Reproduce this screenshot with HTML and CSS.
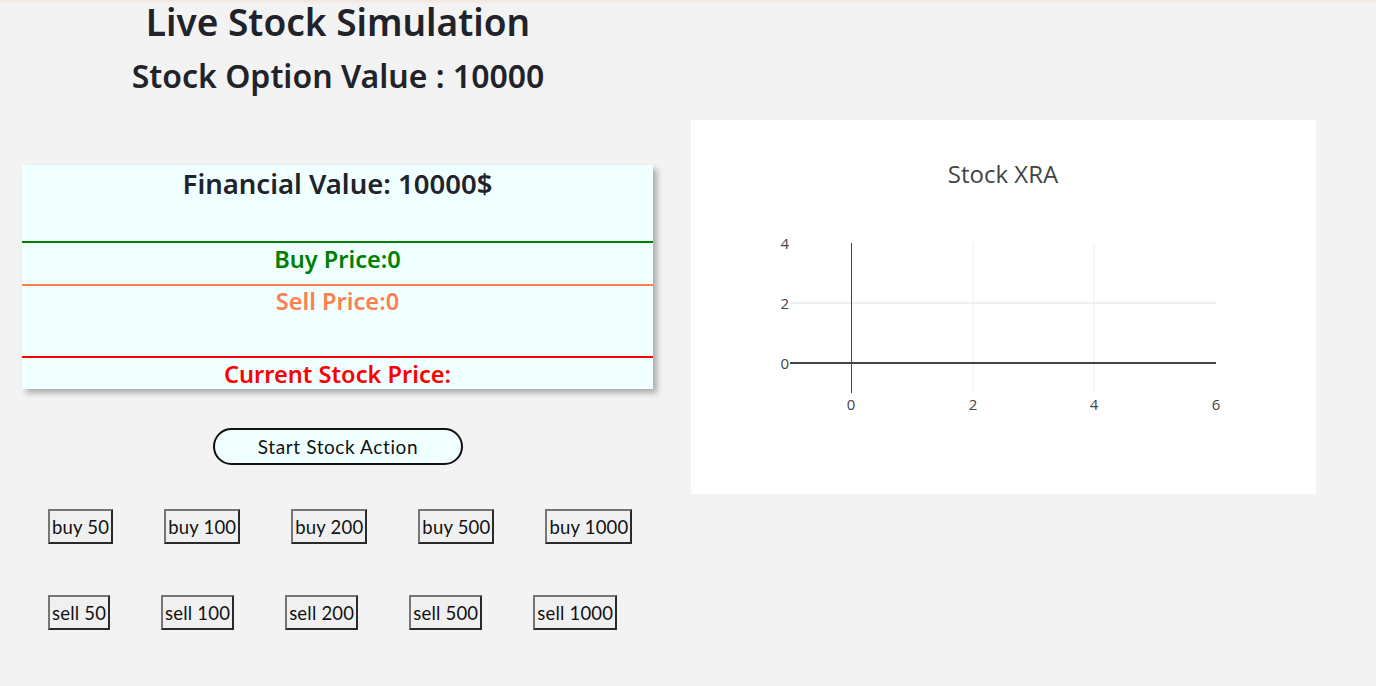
FILE: index.html
```html
<!DOCTYPE html>
<html>
<head>
<meta charset="utf-8">
<link rel="stylesheet" href="styles.css">
</head>
<body>
<div class="page">
  <div class="left">
    <h1 class="title">Live Stock Simulation</h1>
    <h2 class="sub">Stock Option Value : 10000</h2>
    <div class="card">
      <div class="sec fin">Financial Value: 10000$</div>
      <div class="sec buy">Buy Price:0</div>
      <div class="sec sell">Sell Price:0</div>
      <div class="sec cur">Current Stock Price:</div>
    </div>
    <div class="startrow"><button class="start">Start Stock Action</button></div>
    <div class="btnrow">
      <button class="b">buy 50</button>
      <button class="b">buy 100</button>
      <button class="b">buy 200</button>
      <button class="b">buy 500</button>
      <button class="b">buy 1000</button>
    </div>
    <div class="btnrow sellrow">
      <button class="b">sell 50</button>
      <button class="b">sell 100</button>
      <button class="b">sell 200</button>
      <button class="b">sell 500</button>
      <button class="b">sell 1000</button>
    </div>
  </div>
  <div class="right">
    <div class="chart">
      <svg width="625" height="374" viewBox="0 0 625 374" xmlns="http://www.w3.org/2000/svg">
        <text x="312" y="63" text-anchor="middle" class="ctitle">Stock XRA</text>
        <line x1="282" y1="123" x2="282" y2="273" stroke="#eeeeee" stroke-width="1"/>
        <line x1="403" y1="123" x2="403" y2="273" stroke="#eeeeee" stroke-width="1"/>
        <line x1="99" y1="183" x2="525" y2="183" stroke="#eeeeee" stroke-width="2"/>
        <line x1="160.5" y1="123" x2="160.5" y2="273" stroke="#444444" stroke-width="1"/>
        <line x1="99" y1="243" x2="525" y2="243" stroke="#444444" stroke-width="2"/>
        <text x="98" y="129" text-anchor="end" class="tick">4</text>
        <text x="98" y="189" text-anchor="end" class="tick">2</text>
        <text x="98" y="249" text-anchor="end" class="tick">0</text>
        <text x="160" y="290" text-anchor="middle" class="tick">0</text>
        <text x="282" y="290" text-anchor="middle" class="tick">2</text>
        <text x="403" y="290" text-anchor="middle" class="tick">4</text>
        <text x="525" y="290" text-anchor="middle" class="tick">6</text>
      </svg>
    </div>
  </div>
</div>
</body>
</html>
```
FILE: styles.css
```css
html, body {
  margin: 0;
  padding: 0;
  font-family: "Noto Sans", Lato, sans-serif;
  color: #222;
}
body {
  background: linear-gradient(#f2e4da, #f3f3f3 4px) #f3f3f3;
  background-repeat: no-repeat;
  background-size: 100% 4px;
  min-height: 686px;
}
.page {
  display: flex;
  align-items: flex-start;
}
.left {
  width: 676px;
  flex: none;
}
.title {
  margin: 0;
  font-size: 37px;
  line-height: 44px;
  font-weight: 600;
  text-align: center;
  color: #22232a;
}
.sub {
  margin: 14px 0 0;
  font-size: 32px;
  line-height: 36px;
  font-weight: 600;
  text-align: center;
  color: #22232a;
}
.card {
  margin: 71px 0 0 22px;
  width: 631px;
  background: #f0ffff;
  box-shadow: 4px 4px 6px rgba(0, 0, 0, 0.3);
  text-align: center;
  font-weight: 600;
}
.sec {
  box-sizing: border-box;
}
.fin {
  height: 76px;
  font-size: 27.5px;
  line-height: 32px;
  padding-top: 3px;
  color: #22232a;
}
.buy {
  height: 43px;
  border-top: 2px solid #008000;
  color: #008000;
  font-size: 23.6px;
  line-height: 32px;
}
.sell {
  height: 72px;
  border-top: 2px solid #ff7f50;
  color: #ff7f50;
  font-size: 23.6px;
  line-height: 30px;
}
.cur {
  height: 33px;
  border-top: 2px solid #ff0000;
  color: #ff0000;
  font-size: 23.6px;
  line-height: 32px;
}
.startrow {
  display: flex;
  justify-content: center;
  margin-top: 39px;
}
.start {
  width: 250px;
  height: 37px;
  border: 2px solid #111;
  border-radius: 19px;
  background: #f0ffff;
  font-family: Lato, "Noto Sans", sans-serif;
  font-size: 19px;
  letter-spacing: 0.6px;
  color: #111;
  padding: 0;
}
.btnrow {
  display: flex;
  gap: 51px;
  margin: 44px 0 0 48px;
}
.sellrow {
  margin-top: 51px;
}
.b {
  height: 35px;
  padding: 0 2px;
  background: #f0f0f0;
  border: 2px solid;
  border-color: #767676 #2a2a2a #2a2a2a #767676;
  font-family: Lato, "Noto Sans", sans-serif;
  font-size: 18.5px;
  letter-spacing: 0.2px;
  color: #111;
}
.right {
  margin-left: 15px;
  margin-top: 120px;
}
.chart {
  width: 625px;
  height: 374px;
  background: #ffffff;
}
.chart svg {
  display: block;
}
.ctitle {
  font-family: "Open Sans", sans-serif;
  font-size: 24px;
  fill: #444444;
}
.tick {
  font-family: "Open Sans", sans-serif;
  font-size: 15px;
  fill: #444444;
}
```
